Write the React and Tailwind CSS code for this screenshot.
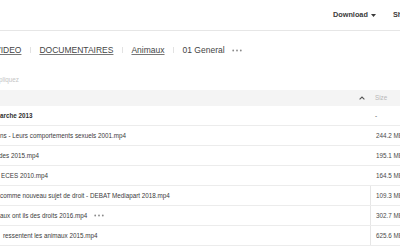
import React from "react";

const Dots = ({ className = "" }) => (
  <svg width="10" height="3" viewBox="0 0 10 3" className={className}>
    <circle cx="1.2" cy="1.5" r="0.9" fill="#8a8a8a" />
    <circle cx="5" cy="1.5" r="0.9" fill="#8a8a8a" />
    <circle cx="8.8" cy="1.5" r="0.9" fill="#8a8a8a" />
  </svg>
);

const Sep = () => <div className="w-px h-[6px] bg-[#e2e2e2] shrink-0" />;

const rows = [
  { name: "ns - Leurs comportements sexuels 2001.mp4", size: "244.2 MB", shift: "ml-0" },
  { name: "des 2015.mp4", size: "195.1 MB", shift: "-ml-[1px]" },
  { name: "ECES 2010.mp4", size: "164.5 MB", shift: "ml-[1px]" },
  { name: "comme nouveau sujet de droit - DEBAT Mediapart 2018.mp4", size: "109.3 MB", shift: "ml-0", line: true },
  { name: "aux ont ils des droits 2016.mp4", size: "302.7 MB", shift: "ml-0", dots: true, line: true },
  { name: "ressentent les animaux 2015.mp4", size: "625.6 MB", shift: "ml-[3px]", line: true },
];

export default function App() {
  return (
    <div className="w-[400px] h-[250px] overflow-hidden bg-white font-['Liberation_Sans',Arial,sans-serif] text-[#3b3b3b]">
      {/* top bar */}
      <div className="h-[31px] border-b border-[#e6e6e6] flex items-center pl-[333px] whitespace-nowrap">
        <div className="flex items-center gap-[3px] text-[7.3px] font-bold text-[#3a3a3a]">
          <span>Download</span>
          <svg width="5" height="3" viewBox="0 0 5 3">
            <path d="M0 0 L5 0 L2.5 3 Z" fill="#3a3a3a" />
          </svg>
        </div>
        <div className="ml-[17px] text-[7.3px] font-bold text-[#3a3a3a]">Share</div>
      </div>

      {/* breadcrumb */}
      <div className="h-[38px] flex items-center -ml-[5px] gap-[8.5px] text-[8.5px] text-[#444] whitespace-nowrap">
        <span className="underline underline-offset-[1px] decoration-[#777]">VIDEO</span>
        <Sep />
        <span className="underline underline-offset-[1px] decoration-[#777]">DOCUMENTAIRES</span>
        <Sep />
        <span className="underline underline-offset-[1px] decoration-[#777]">Animaux</span>
        <Sep />
        <span>01 General</span>
        <Dots className="-ml-[1.5px]" />
      </div>

      {/* description */}
      <div className="h-[21px] flex items-center text-[6.3px] text-[#c4c4c4] whitespace-nowrap">
        <span className="-ml-[1px]">pliquez</span>
      </div>

      {/* table */}
      <div className="w-[430px] text-[6.3px] whitespace-nowrap">
        <div className="h-[16px] bg-[#f4f4f4] flex items-center">
          <div className="w-[370px] flex justify-end pr-[5px]">
            <svg width="6" height="4" viewBox="0 0 6 4">
              <path d="M0.6 3.4 L3 1 L5.4 3.4" stroke="#555" strokeWidth="1.1" fill="none" />
            </svg>
          </div>
          <div className="pl-[5px] text-[#b8b8b8]">Size</div>
        </div>

        <div className="h-[20px] border-b border-[#ececec] flex items-center">
          <div className="w-[370px] font-bold text-[#2e2e2e]">arche 2013</div>
          <div className="pl-[5px] text-[#555]">-</div>
        </div>

        {rows.map((r) => (
          <div key={r.name} className="h-[20px] border-b border-[#ececec] flex items-stretch">
            <div className="w-[370px] flex items-center overflow-hidden">
              <span className={r.shift}>{r.name}</span>
              {r.dots && <Dots className="ml-[7px]" />}
            </div>
            <div className={"flex items-center pl-[5px] text-[#4a4a4a] " + (r.line ? "border-l border-[#e6e6e6]" : "border-l border-transparent")}>
              {r.size}
            </div>
          </div>
        ))}
      </div>
    </div>
  );
}
